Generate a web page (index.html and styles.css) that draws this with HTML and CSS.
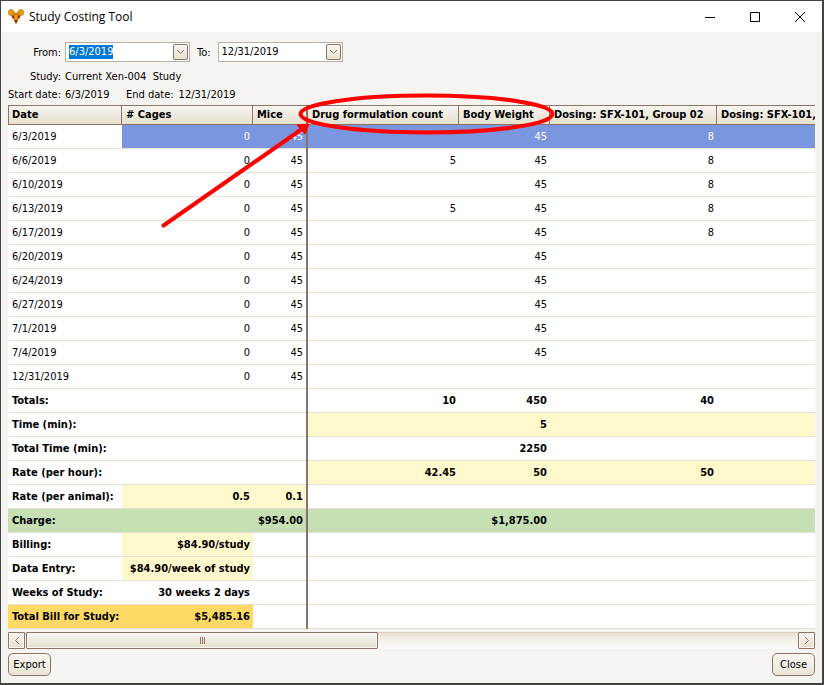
FILE: index.html
```html
<!DOCTYPE html>
<html lang="en">
<head>
<meta charset="utf-8">
<title>Study Costing Tool</title>
<link rel="stylesheet" href="styles.css">
</head>
<body>
<div class="window">
  <header class="titlebar">
    <svg class="logo" width="16" height="16" viewBox="0 0 16 16" aria-hidden="true">
      <path class="body" d="M1 3.500L3 1.500 8 4l5-2.500 2 2-2.500 4L10 11.500 8 15l-2-3.500L3.500 7.500z"/>
      <circle class="ear" cx="3.200" cy="3.500" r="2.900"/><circle class="ear" cx="12.800" cy="3.500" r="2.900"/>
      <path class="snout" d="M4 6.500l2 .5v2H4.500zM12 6.500l-2 .5v2h1.500zM6.500 11h3L8 15z"/>
      <path class="face" d="M7 5h2l.5 6h-3z"/>
    </svg>
    <h1>Study Costing Tool</h1>
    <div class="controls">
      <button aria-label="Minimize"><svg width="12" height="12"><path d="M1 6.500h10"/></svg></button>
      <button aria-label="Maximize"><svg width="12" height="12"><path d="M1.500 1.500h9v9h-9z"/></svg></button>
      <button aria-label="Close window"><svg width="12" height="12"><path d="M1 1l10 10M11 1L1 11"/></svg></button>
    </div>
  </header>
  <main>
    <div class="filters">
      <label class="lead" for="from">From:</label>
      <div class="combo"><input id="from" type="text" value="6/3/2019"><button aria-label="Open from date"><svg width="9" height="6"><path d="M1 1l3.500 3.500L8 1"/></svg></button></div>
      <label class="to" for="to">To:</label>
      <div class="combo"><input id="to" type="text" value="12/31/2019"><button aria-label="Open to date"><svg width="9" height="6"><path d="M1 1l3.500 3.500L8 1"/></svg></button></div>
    </div>
    <div class="info"><span class="lead">Study:</span><span>Current Xen-004&nbsp; Study</span></div>
    <div class="info"><span class="lead">Start date:</span><span class="start">6/3/2019</span><span class="end">End date:</span><span>12/31/2019</span></div>
    <div class="grid">
      <table>
        <colgroup><col class="c-date"><col class="c-cages"><col class="c-mice"><col class="c-drug"><col class="c-body"><col class="c-dose"><col></colgroup>
        <thead><tr><th>Date</th><th># Cages</th><th>Mice</th><th>Drug formulation count</th><th>Body Weight</th><th>Dosing: SFX-101, Group 02</th><th>Dosing: SFX-101,</th></tr></thead>
        <tbody>
          <tr class="selected"><td>6/3/2019</td><td>0</td><td>45</td><td></td><td>45</td><td>8</td><td></td></tr>
          <tr><td>6/6/2019</td><td>0</td><td>45</td><td>5</td><td>45</td><td>8</td><td></td></tr>
          <tr><td>6/10/2019</td><td>0</td><td>45</td><td></td><td>45</td><td>8</td><td></td></tr>
          <tr><td>6/13/2019</td><td>0</td><td>45</td><td>5</td><td>45</td><td>8</td><td></td></tr>
          <tr><td>6/17/2019</td><td>0</td><td>45</td><td></td><td>45</td><td>8</td><td></td></tr>
          <tr><td>6/20/2019</td><td>0</td><td>45</td><td></td><td>45</td><td></td><td></td></tr>
          <tr><td>6/24/2019</td><td>0</td><td>45</td><td></td><td>45</td><td></td><td></td></tr>
          <tr><td>6/27/2019</td><td>0</td><td>45</td><td></td><td>45</td><td></td><td></td></tr>
          <tr><td>7/1/2019</td><td>0</td><td>45</td><td></td><td>45</td><td></td><td></td></tr>
          <tr><td>7/4/2019</td><td>0</td><td>45</td><td></td><td>45</td><td></td><td></td></tr>
          <tr><td>12/31/2019</td><td>0</td><td>45</td><td></td><td></td><td></td><td></td></tr>
        </tbody>
        <tfoot>
          <tr><td>Totals:</td><td></td><td></td><td>10</td><td>450</td><td>40</td><td></td></tr>
          <tr><td>Time (min):</td><td></td><td></td><td class="edit"></td><td class="edit">5</td><td class="edit"></td><td class="edit"></td></tr>
          <tr><td>Total Time (min):</td><td></td><td></td><td></td><td>2250</td><td></td><td></td></tr>
          <tr><td>Rate (per hour):</td><td></td><td></td><td class="edit">42.45</td><td class="edit">50</td><td class="edit">50</td><td class="edit"></td></tr>
          <tr><td>Rate (per animal):</td><td class="edit">0.5</td><td class="edit">0.1</td><td></td><td></td><td></td><td></td></tr>
          <tr class="charge"><td>Charge:</td><td></td><td>$954.00</td><td></td><td>$1,875.00</td><td></td><td></td></tr>
          <tr><td>Billing:</td><td class="edit">$84.90/study</td><td></td><td></td><td></td><td></td><td></td></tr>
          <tr><td>Data Entry:</td><td class="edit">$84.90/week of study</td><td></td><td></td><td></td><td></td><td></td></tr>
          <tr><td>Weeks of Study:</td><td>30 weeks 2 days</td><td></td><td></td><td></td><td></td><td></td></tr>
          <tr><td class="bill">Total Bill for Study:</td><td class="bill">$5,485.16</td><td></td><td></td><td></td><td></td><td></td></tr>
        </tfoot>
      </table>
    </div>
    <div class="scrollbar">
      <button class="step" aria-label="Scroll left"><svg width="6" height="9"><path d="M5 1L1.500 4.500 5 8"/></svg></button>
      <div class="track"><div class="thumb"><i></i><i></i><i></i></div></div>
      <button class="step" aria-label="Scroll right"><svg width="6" height="9"><path d="M1 1l3.500 3.500L1 8"/></svg></button>
    </div>
    <footer><button>Export</button><button>Close</button></footer>
  </main>
  <svg class="annotation" width="600" height="240" aria-hidden="true">
    <ellipse cx="426.500" cy="114" rx="126" ry="18.500"/>
    <path class="shaft" d="M163.500 225.500L302 129"/>
    <path class="head" d="M309 124L297 125L305 134Z"/>
  </svg>
</div>
<script src="app.js"></script>
</body>
</html>
```
FILE: styles.css
```css
* { box-sizing: border-box; }
body {
  margin: 0;
  background: #f5f4f0;
  color: #000;
  font: 11px/14px "DejaVu Sans Condensed", Tahoma, sans-serif;
}
button, input { font: inherit; color: inherit; }
button { padding: 0; }
svg { display: block; }
svg path { fill: none; stroke: #8b7365; }
.window {
  position: relative;
  min-height: 100vh;
  border: 2px solid #454244;
  border-top-width: 1px;
  border-left-width: 1px;
  display: flex;
  flex-direction: column;
}
.titlebar { display: flex; align-items: center; height: 31px; background: #fff; padding-left: 7px; }
.logo path, .logo circle { stroke: none; }
.logo .body { fill: #c9720a; }
.logo .ear { fill: #e39a10; stroke: #c48a1c; }
.logo .snout { fill: #7a2c14; }
.logo .face { fill: #f59a00; }
h1 { margin: 0 0 0 5px; font: 12px/16px "Open Sans", sans-serif; }
.controls { display: flex; margin-left: auto; }
.controls button { width: 45px; height: 30px; border: 0; background: none; display: grid; place-items: center; }
.controls path { stroke: #000; }
main { padding: 10px 7px 7px; }
.filters { display: flex; align-items: center; height: 20px; }
.filters label { padding-top: 2px; }
.lead { width: 53px; margin-right: 4px; text-align: right; }
.to { margin: 0 7px; }
.combo { display: flex; align-items: center; width: 125px; height: 20px; border: 1px solid #bdaea6; background: #fff; padding-right: 1px; }
.combo input { flex: 1; min-width: 0; border: 0; padding: 0 0 0 3px; background: none; outline: 0; }
.combo input::selection { background: #0078d7; color: #fff; }
.combo button { width: 15px; height: 16px; border: 1px solid #8b7365; border-radius: 2px; background: linear-gradient(#f8f6f2, #e7e1cf); display: grid; place-items: center; }
.info { display: flex; align-items: center; height: 18px; white-space: nowrap; }
.filters + .info { margin-top: 6px; }
.start { width: 61px; }
.end { margin-right: 5px; }
.grid { overflow: hidden; background: #fff; margin-top: 1px; }
table { width: 100%; table-layout: fixed; border-collapse: separate; border-spacing: 0; }
.c-date { width: 114px; }
.c-cages { width: 131px; }
.c-mice { width: 55px; }
.c-drug { width: 151px; }
.c-body { width: 91px; }
.c-dose { width: 167px; }
th, td { white-space: nowrap; padding: 0 3px 0 4px; }
th {
  height: 20px;
  text-align: left;
  border: solid #8b7365;
  border-width: 1px 1px 1px 0;
  background: linear-gradient(#f7f5f1, #e6e0cd);
}
th:first-child { border-left-width: 1px; padding-left: 3px; }
th:last-child { border-right: 0; padding-right: 0; }
td { height: 24px; text-align: right; box-shadow: inset 0 -1px #e7e1d3; }
td:first-child { text-align: left; }
th:nth-child(3), td:nth-child(3) { border-right: 2px solid #8b7365; }
.selected td:not(:first-child) { background: #7a96df; color: #fff; }
tfoot { font-weight: bold; }
.edit { background: #fff8cc; }
.charge td { background: #c6e0b4; }
td.bill { background: #ffd966; }
.scrollbar { display: flex; height: 17px; margin-top: 3px; background: linear-gradient(#e9dfd1, #f8f5ef 60%, #fcfbf8); border-top: 1px solid #dcd3c5; }
.step, .thumb { margin-top: -1px; height: 17px; border: 1px solid #8b7365; border-radius: 1px; background: linear-gradient(#f7f5f1, #e6e0cd); box-shadow: inset 0 0 0 1px #faf8f4; }
.step { width: 17px; display: grid; place-items: center; }
.track { flex: 1; padding-left: 1px; }
.thumb { width: 45.6%; display: flex; align-items: center; justify-content: center; gap: 1px; }
.thumb i { width: 1px; height: 7px; background: #8b7365; }
footer { display: flex; justify-content: space-between; margin-top: 4px; }
footer button { width: 43px; height: 23px; border: 1px solid #8b7365; border-radius: 5px; background: linear-gradient(#f8f6f2, #eae5d6); }
.annotation { position: absolute; left: -1px; top: -1px; pointer-events: none; }
.annotation ellipse { fill: none; stroke: #f00; stroke-width: 4; }
.annotation .shaft { stroke: #f00; stroke-width: 4; stroke-linecap: round; }
.annotation .head { fill: #f00; stroke: #f00; stroke-linejoin: round; }
```
FILE: app.js
```js
const from = document.getElementById("from");
from.focus();
from.select();
```
